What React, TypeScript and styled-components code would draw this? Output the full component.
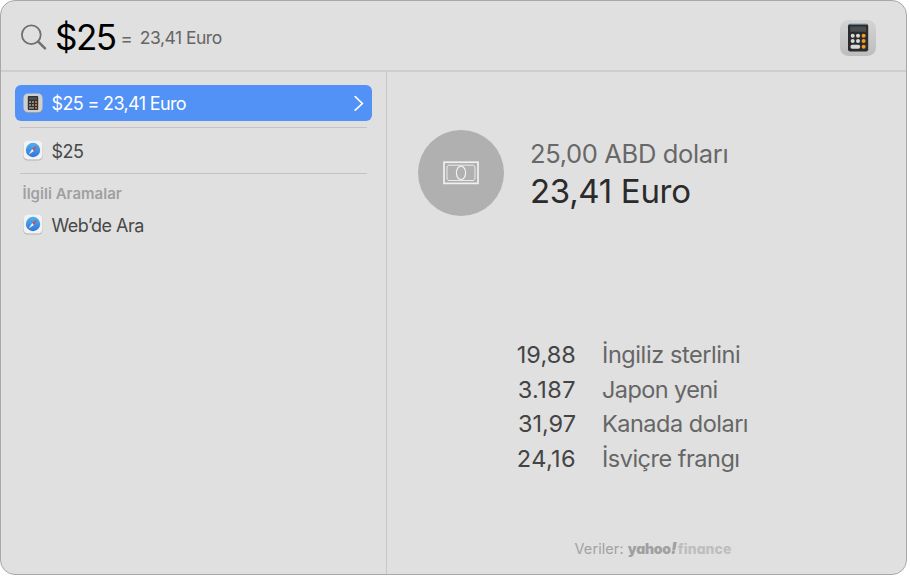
import React from "react";
import styled, { createGlobalStyle } from "styled-components";

const GlobalStyle = createGlobalStyle`
  * { box-sizing: border-box; }
  body { margin: 0; background: #fff; font-family: Inter, "Liberation Sans", sans-serif; }
  svg { display: block; flex: none; }
`;

const Window = styled.main`
  width: 907px;
  height: 575px;
  display: flex;
  flex-direction: column;
  overflow: hidden;
  background: #e0e0e0;
  border: 1.5px solid #a8a8a8;
  border-radius: 15px;
`;

const Header = styled.header`
  height: 71px;
  flex: none;
  display: flex;
  align-items: center;
  padding: 3px 29px 0 19px;
  border-bottom: 2px solid #cecece;
`;

const Text = styled.span<{ $size: number; $color: string; $spacing?: number; $weight?: number; $line?: number }>`
  font-size: ${(p) => p.$size}px;
  color: ${(p) => p.$color};
  letter-spacing: ${(p) => p.$spacing ?? 0}px;
  font-weight: ${(p) => p.$weight ?? 400};
  line-height: ${(p) => (p.$line ? `${p.$line}px` : "normal")};
  white-space: pre;
`;

const Query = styled(Text)`
  margin-left: 7px;
`;

const Equals = styled(Text)`
  margin: 2px 0 0 5px;
`;

const Answer = styled(Text)`
  margin: 1px auto 0 7px;
`;

const Columns = styled.div`
  flex: 1;
  display: flex;
`;

const Sidebar = styled.nav`
  width: 386px;
  flex: none;
  display: flex;
  flex-direction: column;
  padding: 12.5px 13px 0 13.5px;
  border-right: 1.5px solid #c8c8c8;
`;

const Row = styled.div<{ $selected?: boolean }>`
  height: 36px;
  width: 357.5px;
  display: flex;
  align-items: center;
  gap: 9px;
  padding: 0 8px;
  border-radius: 6px;
  color: ${(p) => (p.$selected ? "#fff" : "#484848")};
  background: ${(p) => (p.$selected ? "#5291f5" : "transparent")};
`;

const Divider = styled.hr`
  width: 347px;
  height: 1px;
  border: 0;
  margin: 6px 0 5px 5px;
  background: #c3c3c3;

  & ~ & {
    margin: 4px 0 5px 5px;
  }
`;

const RowLabel = styled(Text)`
  flex: 1;
  padding-top: 2px;
`;

const SectionTitle = styled(Text)`
  margin: 5px 0 3px 8px;
`;

const Detail = styled.section`
  flex: 1;
  display: flex;
  flex-direction: column;
  padding: 58px 30px 0 31px;
`;

const Summary = styled.div`
  display: flex;
  align-items: center;
  gap: 26px;
`;

const Badge = styled.div`
  width: 86px;
  height: 86px;
  display: grid;
  place-items: center;
  border-radius: 50%;
  background: #b0b0b0;
`;

const Amounts = styled.div`
  display: flex;
  flex-direction: column;
  margin-top: -2px;
`;

const Rates = styled.div`
  display: grid;
  grid-template-columns: 158px 1fr;
  grid-auto-rows: 34.6px;
  column-gap: 26px;
  margin-top: 122px;
`;

const RateValue = styled(Text)`
  text-align: right;
`;

const Footer = styled.footer`
  display: flex;
  align-items: baseline;
  margin: 62px 0 0 156.5px;
`;

const Brand = styled(Text)`
  font-feature-settings: "cv11" 1;
`;

const Bang = styled(Brand)`
  font-style: italic;
`;

const SearchIcon = () => (
  <svg width="28" height="28" viewBox="0 0 28 28" fill="none" stroke="#707070">
    <circle cx="11.3" cy="11.7" r="9.4" strokeWidth="1.8" />
    <path d="M18.2 18.6 L25 25.4" strokeWidth="2.5" strokeLinecap="round" />
  </svg>
);

const CalculatorIcon = ({ size }: { size: number }) => (
  <svg width={size} height={size} viewBox="0 0 38 38">
    <defs>
      <linearGradient id="calcPlate" x1="0" y1="0" x2="0" y2="1">
        <stop offset="0" stopColor="#d4d4d4" />
        <stop offset="1" stopColor="#bdbdbd" />
      </linearGradient>
    </defs>
    <rect x="1" y="1.9" width="36" height="36" rx="8.5" fill="url(#calcPlate)" />
    <rect x="9" y="6" width="20.2" height="27.5" rx="2.2" fill="#2b2b2b" />
    <rect x="10.3" y="5.7" width="18" height="1.2" fill="#668199" />
    <rect x="11.3" y="8.5" width="15.8" height="5.2" fill="#4b4d4f" />
    <g fill="#d9d9d9">
      <circle cx="13.7" cy="17.7" r="2" />
      <circle cx="19" cy="17.7" r="2" />
      <circle cx="13.7" cy="23.1" r="2" />
      <circle cx="19" cy="23.1" r="2" />
      <rect x="11.5" y="26.7" width="9.6" height="4" rx="1.6" />
    </g>
    <g fill="#f39a25">
      <circle cx="24.6" cy="17.7" r="2" />
      <circle cx="24.6" cy="23.1" r="2" />
      <circle cx="24.6" cy="28.7" r="2" />
    </g>
  </svg>
);

const SmallCalculatorIcon = () => (
  <svg width="20" height="20" viewBox="0 0 20 20">
    <rect x="0.5" y="1" width="19" height="19" rx="4.5" fill="#8a8f98" />
    <rect x="0.5" y="0.5" width="19" height="18.7" rx="4.5" fill="#cfcfcf" />
    <rect x="4.8" y="3" width="10.4" height="14" rx="1" fill="#303030" />
    <rect x="6" y="4.2" width="8" height="2.5" fill="#505050" />
    <g fill="#858585">
      <rect x="6" y="8" width="2" height="2" />
      <rect x="9" y="8" width="2" height="2" />
      <rect x="6" y="11" width="2" height="2" />
      <rect x="9" y="11" width="2" height="2" />
      <rect x="6" y="14" width="5" height="1.8" />
    </g>
    <g fill="#b87536">
      <rect x="12" y="8" width="2" height="2" />
      <rect x="12" y="11" width="2" height="2" />
      <rect x="12" y="14" width="2" height="1.8" />
    </g>
  </svg>
);

const SafariIcon = () => (
  <svg width="20" height="21" viewBox="0 0 20 21">
    <defs>
      <linearGradient id="safariDial" x1="0" y1="0" x2="0" y2="1">
        <stop offset="0" stopColor="#4fb2ee" />
        <stop offset="1" stopColor="#3274dc" />
      </linearGradient>
    </defs>
    <rect x="0.3" y="1.4" width="19.4" height="19.2" rx="4.7" fill="#b0b0b0" />
    <rect x="0.5" y="0.8" width="19" height="18.8" rx="4.5" fill="#f3f3f3" />
    <circle cx="10" cy="10" r="7.2" fill="url(#safariDial)" />
    <path d="M14.3 5.6 L10.9 10.9 L9.1 9.1 Z" fill="#d8484e" />
    <path d="M5.7 14.4 L9.1 9.1 L10.9 10.9 Z" fill="#edf1f5" />
  </svg>
);

const ChevronIcon = () => (
  <svg width="10" height="16" viewBox="0 0 10 16" fill="none" stroke="#fff" strokeWidth="1.6">
    <path d="M1.2 1.6 L8.4 8.5 L1.2 15.2" strokeLinecap="round" />
  </svg>
);

const BanknoteIcon = () => (
  <svg width="36" height="24" viewBox="0 0 36 24" fill="none" stroke="#f0f0f0">
    <rect x="1" y="1.2" width="34" height="21.2" strokeWidth="1.7" />
    <path
      d="M5.5 4.2 H30.5 A1.8 1.8 0 0 0 32 5.7 V18 A1.8 1.8 0 0 0 30.5 19.5 H5.5 A1.8 1.8 0 0 0 4 18 V5.7 A1.8 1.8 0 0 0 5.5 4.2 Z"
      strokeWidth="0.9"
    />
    <ellipse cx="18" cy="11.8" rx="4.6" ry="6.7" strokeWidth="1.2" />
  </svg>
);

const rates = [
  { value: "19,88", name: "İngiliz sterlini", valueSpacing: 0.1, nameSpacing: -0.42 },
  { value: "3.187", name: "Japon yeni", valueSpacing: 0.45, nameSpacing: -0.6 },
  { value: "31,97", name: "Kanada doları", valueSpacing: 0, nameSpacing: -0.5 },
  { value: "24,16", name: "İsviçre frangı", valueSpacing: 0.4, nameSpacing: -0.5 },
];

export default function App() {
  return (
    <>
      <GlobalStyle />
      <Window>
        <Header>
          <SearchIcon />
          <Query $size={35} $color="#000" $spacing={-1.5}>$25</Query>
          <Equals $size={18.5} $color="#666">=</Equals>
          <Answer $size={17.5} $color="#666" $spacing={-0.5}>23,41 Euro</Answer>
          <CalculatorIcon size={38} />
        </Header>
        <Columns>
          <Sidebar>
            <Row $selected>
              <SmallCalculatorIcon />
              <RowLabel $size={18} $color="inherit" $spacing={-0.65}>$25 = 23,41 Euro</RowLabel>
              <ChevronIcon />
            </Row>
            <Divider />
            <Row>
              <SafariIcon />
              <RowLabel $size={18} $color="inherit" $spacing={-0.5}>$25</RowLabel>
            </Row>
            <Divider />
            <SectionTitle $size={15} $color="#a0a0a0" $weight={600} $spacing={0.02} $line={20}>İlgili Aramalar</SectionTitle>
            <Row>
              <SafariIcon />
              <RowLabel $size={18} $color="inherit" $spacing={-0.5}>Web’de Ara</RowLabel>
            </Row>
          </Sidebar>
          <Detail>
            <Summary>
              <Badge>
                <BanknoteIcon />
              </Badge>
              <Amounts>
                <Text $size={25.5} $color="#686868" $spacing={-0.35} $line={37}>25,00 ABD doları</Text>
                <Text $size={33} $color="#2b2b2b" $spacing={-0.3} $line={38}>23,41 Euro</Text>
              </Amounts>
            </Summary>
            <Rates>
              {rates.map((rate) => (
                <React.Fragment key={rate.name}>
                  <RateValue $size={23.5} $color="#444" $spacing={rate.valueSpacing} $line={34}>{rate.value}</RateValue>
                  <Text $size={23.5} $color="#666" $spacing={rate.nameSpacing} $line={34}>{rate.name}</Text>
                </React.Fragment>
              ))}
            </Rates>
            <Footer>
              <Text $size={14.5} $color="#a2a2a2" $spacing={0.08} $line={20}>Veriler: </Text>
              <Brand $size={14} $color="#a0a0a0" $weight={900} $spacing={-0.3} $line={20}>yahoo</Brand>
              <Bang $size={16} $color="#a0a0a0" $weight={900} $spacing={1} $line={20}>!</Bang>
              <Brand $size={14} $color="#bebebe" $weight={800} $spacing={0.05} $line={20}>finance</Brand>
            </Footer>
          </Detail>
        </Columns>
      </Window>
    </>
  );
}
